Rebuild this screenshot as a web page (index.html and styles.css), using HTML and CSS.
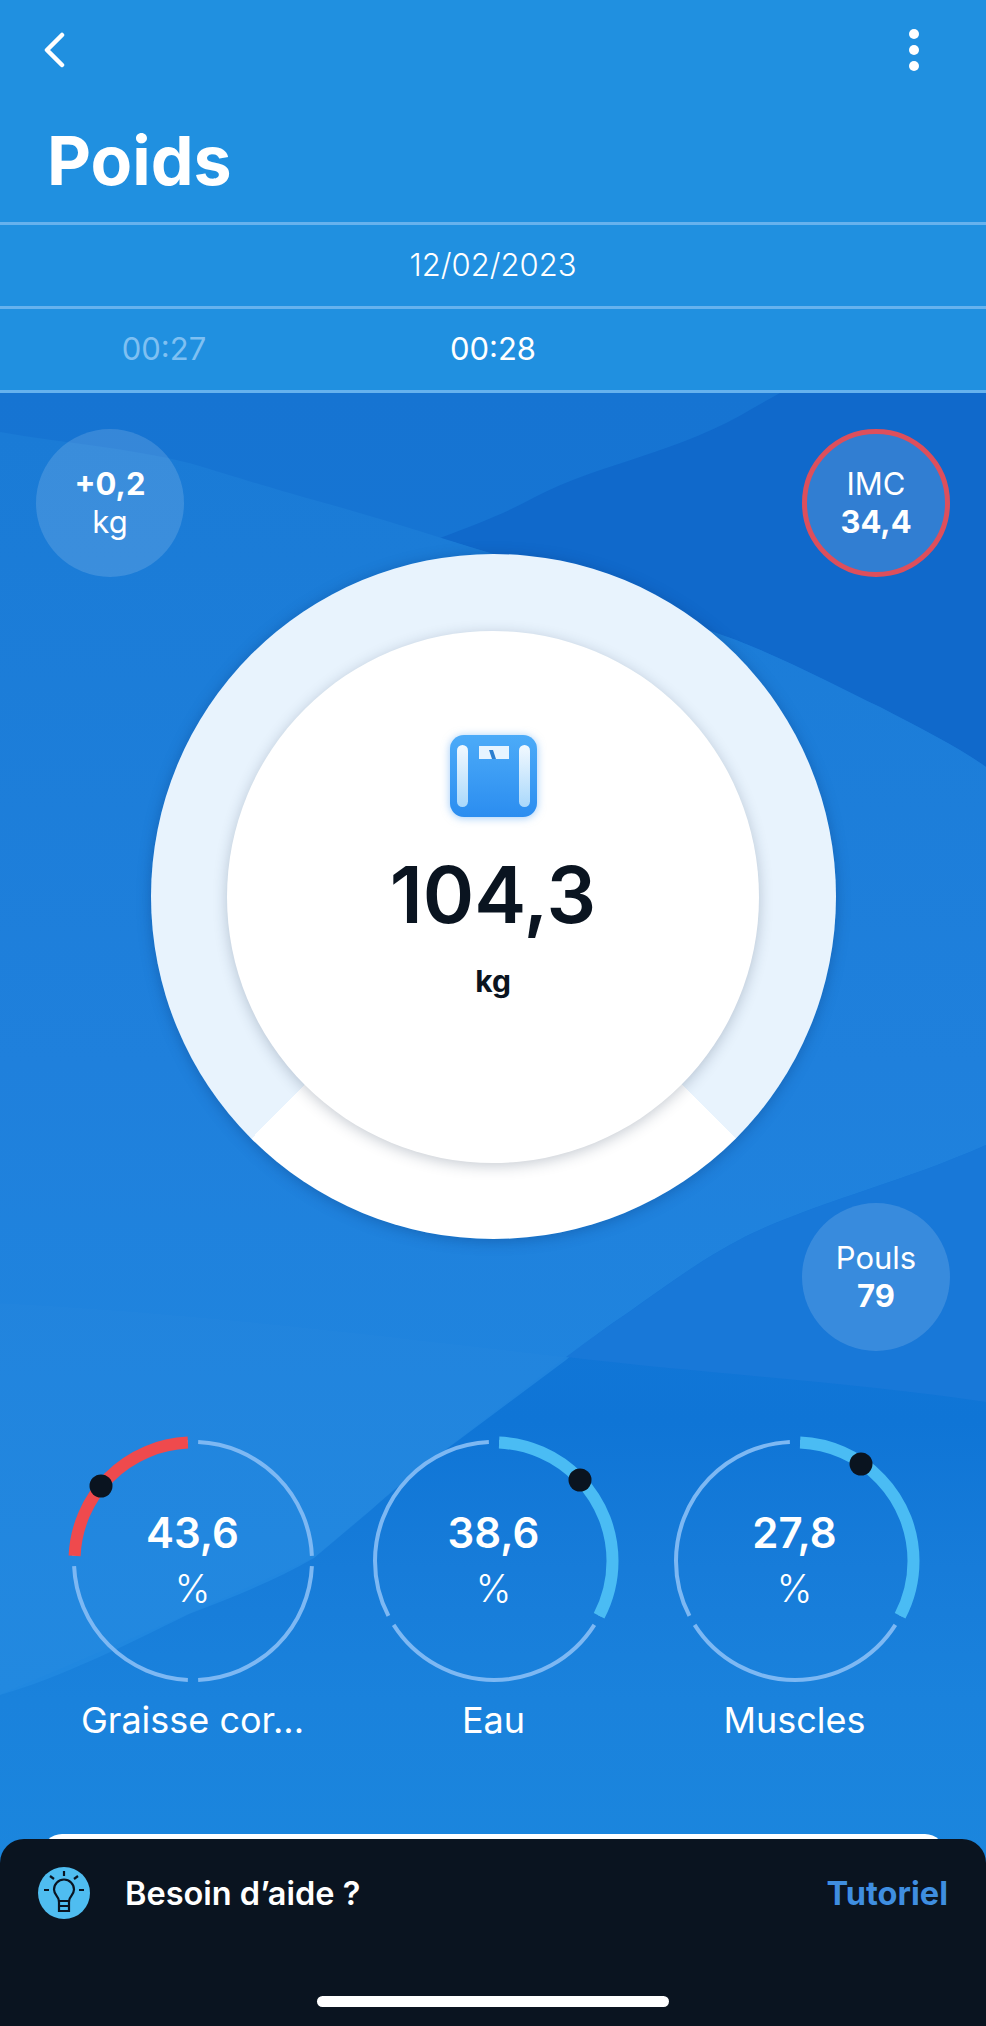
FILE: index.html
```html
<!DOCTYPE html>
<html lang="fr">
<head>
    <meta charset="UTF-8">
    <meta name="viewport" content="width=device-width, initial-scale=1.0">
    <title>Poids</title>
    <link rel="stylesheet" href="styles.css">
</head>
<body>
    <header class="top">
        <div class="top-bar">
            <svg class="back-icon" viewBox="0 0 24 36">
                <path d="M20 3 L5 18 L20 33"></path>
            </svg>
            <svg class="more-icon" viewBox="0 0 12 44">
                <circle cx="6" cy="6" r="5"></circle>
                <circle cx="6" cy="22" r="5"></circle>
                <circle cx="6" cy="38" r="5"></circle>
            </svg>
        </div>
        <h1>Poids</h1>
        <div class="date-row">12/02/2023</div>
        <div class="time-row">
            <span class="time-old">00:27</span>
            <span>00:28</span>
            <span></span>
        </div>
    </header>

    <main class="content">
        <!-- soft waves behind everything -->
        <svg class="waves" viewBox="0 0 986 1633">
            <defs>
                <linearGradient id="lightWave" x1="0" y1="0" x2="0" y2="1">
                    <stop offset="0" stop-color="#1a7bd6"></stop>
                    <stop offset="0.5" stop-color="#1f80dc"></stop>
                    <stop offset="1" stop-color="#2088e0"></stop>
                </linearGradient>
            </defs>
            <path class="wave-dark" d="M755 14 C680 60 600 70 535 104 C510 118 480 130 440 145 L490 160 C580 190 660 220 736 247 C790 268 840 295 880 314 C920 335 960 355 986 374 L986 0 L780 0 Z"></path>
            <path class="wave-light" d="M0 39 C63 50 130 55 189 70 C240 85 270 95 314 107 C380 125 440 145 490 160 C580 190 660 220 736 247 C790 268 840 295 880 314 C920 335 960 355 986 374 L986 752 C900 790 830 805 755 839 C710 860 670 890 629 919 C605 935 585 950 566 967 L440 1061 C400 1090 385 1105 371 1117 L314 1165 C270 1190 230 1205 189 1221 C130 1250 60 1285 0 1302 Z"></path>
            <path class="wave-band" d="M986 752 C900 790 830 805 755 839 C710 860 670 890 629 919 C605 935 585 950 566 964 C700 980 860 990 986 1009 Z"></path>
            <path class="wave-faint" d="M0 910 C200 920 400 945 566 964 L440 1061 L371 1117 L314 1165 L189 1221 L0 1302 Z"></path>
        </svg>

        <div class="bubble-row">
            <div class="bubble">
                <b>+0,2</b>
                <span>kg</span>
            </div>
            <div class="bubble bubble-alert">
                <span>IMC</span>
                <b>34,4</b>
            </div>
        </div>

        <div class="ring">
            <div class="ring-inner">
                <svg class="scale-icon" viewBox="0 0 87 82">
                    <defs>
                        <linearGradient id="scaleBg" x1="0" y1="0" x2="0" y2="1">
                            <stop offset="0" stop-color="#4cabf8"></stop>
                            <stop offset="1" stop-color="#2b8df0"></stop>
                        </linearGradient>
                        <linearGradient id="scaleBar" x1="0" y1="0" x2="0" y2="1">
                            <stop offset="0" stop-color="#f2f9ff"></stop>
                            <stop offset="1" stop-color="#a9d8fb"></stop>
                        </linearGradient>
                    </defs>
                    <rect width="87" height="82" rx="14" fill="url(#scaleBg)"></rect>
                    <rect x="7" y="10" width="11" height="62" rx="5.5" fill="url(#scaleBar)"></rect>
                    <rect x="69" y="10" width="11" height="62" rx="5.5" fill="url(#scaleBar)"></rect>
                    <rect x="29" y="11" width="30" height="13" fill="#e6f4ff"></rect>
                    <path d="M39 15 L43 15 L46 24 L42 24 Z" fill="#2b7fd0"></path>
                </svg>
                <div class="weight">104,3</div>
                <div class="weight-unit">kg</div>
            </div>
        </div>

        <div class="pulse-row">
            <div class="bubble">
                <span>Pouls</span>
                <b>79</b>
            </div>
        </div>

        <div class="gauges">
            <div class="gauge">
                <div class="dial">
                    <svg viewBox="0 0 260 260">
                        <circle class="track track-4" cx="130" cy="130" r="119" pathLength="360"></circle>
                        <circle class="arc arc-red" cx="130" cy="130" r="118.5" pathLength="360"></circle>
                        <circle class="knob" cx="38" cy="55" r="11.5"></circle>
                    </svg>
                    <div class="dial-text">
                        <b>43,6</b>
                        <span>%</span>
                    </div>
                </div>
                <div class="gauge-name">Graisse cor...</div>
            </div>
            <div class="gauge">
                <div class="dial">
                    <svg viewBox="0 0 260 260">
                        <circle class="track track-3" cx="130" cy="130" r="119" pathLength="360"></circle>
                        <circle class="arc arc-blue" cx="130" cy="130" r="118.5" pathLength="360"></circle>
                        <circle class="knob" cx="216" cy="49" r="11.5"></circle>
                    </svg>
                    <div class="dial-text">
                        <b>38,6</b>
                        <span>%</span>
                    </div>
                </div>
                <div class="gauge-name">Eau</div>
            </div>
            <div class="gauge">
                <div class="dial">
                    <svg viewBox="0 0 260 260">
                        <circle class="track track-3" cx="130" cy="130" r="119" pathLength="360"></circle>
                        <circle class="arc arc-blue" cx="130" cy="130" r="118.5" pathLength="360"></circle>
                        <circle class="knob" cx="196" cy="33" r="11.5"></circle>
                    </svg>
                    <div class="dial-text">
                        <b>27,8</b>
                        <span>%</span>
                    </div>
                </div>
                <div class="gauge-name">Muscles</div>
            </div>
        </div>

        <div class="card-peek"></div>
    </main>

    <div class="help-sheet">
        <div class="help-row">
            <svg class="bulb-icon" viewBox="0 0 52 52">
                <circle class="bulb-bg" cx="26" cy="26" r="26"></circle>
                <path class="bulb-line" d="M21 34 C21 30 16 28 16 22.500 A10 10 0 0 1 36 22.500 C36 28 31 30 31 34 Z"></path>
                <path class="bulb-line" d="M21 34 H31 V44 H21 Z M21 39 H31"></path>
                <path class="bulb-line" d="M26 4 V9 M12 9 L16 12 M40 9 L36 12 M6 23 H11 M41 23 H46"></path>
            </svg>
            <span class="help-text">Besoin d’aide ?</span>
            <span class="help-link">Tutoriel</span>
        </div>
        <div class="home-bar"></div>
    </div>
</body>
</html>
```

FILE: styles.css
```css
* {
    box-sizing: border-box;
}

html, body {
    margin: 0;
    padding: 0;
}

body {
    position: relative;
    width: 986px;
    height: 2026px;
    overflow: hidden;
    font-family: Inter, "Liberation Sans", sans-serif;
    color: #fff;
    background-color: #1e84de;
}

/* header */
.top {
    background-color: #2090e0;
    height: 393px;
}

.top-bar {
    display: flex;
    justify-content: space-between;
    align-items: center;
    padding: 23px 66px 0 42px;
    height: 77px;
}

.back-icon {
    width: 24px;
    height: 36px;
    fill: none;
    stroke: #fff;
    stroke-width: 4.5;
    stroke-linecap: round;
    stroke-linejoin: round;
}

.more-icon {
    width: 12px;
    height: 44px;
    fill: #fff;
}

h1 {
    margin: 0;
    padding: 38px 0 0 47px;
    height: 145px;
    font-size: 68px;
    font-weight: 700;
    line-height: 90px;
}

.date-row,
.time-row {
    height: 84px;
    border-top: 3px solid #66b2ee;
    font-size: 31px;
    font-weight: 300;
    line-height: 79px;
}

.date-row {
    text-align: center;
}

.time-row {
    height: 87px;
    display: grid;
    grid-template-columns: 328px 330px 328px;
    text-align: center;
    border-bottom: 3px solid #66b2ee;
    font-weight: 400;
}

.time-old {
    color: #7fc0f2;
}

/* main area */
.content {
    position: relative;
    height: 1633px;
    padding: 36px 36px 0;
    background: linear-gradient(180deg, #1674d2 0%, #1678d8 46%, #0f75d6 63%, #177cd9 72%, #1a82dc 80%, #1c8adf 100%);
}

.waves {
    position: absolute;
    left: 0;
    top: 0;
    width: 986px;
    height: 1633px;
}

.wave-dark {
    fill: #1069cb;
}

.wave-light {
    fill: url(#lightWave);
}

.wave-band {
    fill: #1878d8;
}

.wave-faint {
    fill: rgba(255, 255, 255, 0.012);
}

.bubble-row,
.pulse-row {
    position: relative;
    display: flex;
    justify-content: space-between;
}

.pulse-row {
    justify-content: flex-end;
    margin-top: -36px;
}

.bubble {
    display: flex;
    flex-direction: column;
    align-items: center;
    justify-content: center;
    width: 148px;
    height: 148px;
    border-radius: 50%;
    background-color: rgba(255, 255, 255, 0.14);
    font-size: 31px;
    line-height: 38px;
}

.bubble b {
    font-weight: 700;
}

.bubble-alert {
    border: 5px solid #dd4f5c;
}

/* big ring */
.ring {
    position: relative;
    width: 685px;
    height: 685px;
    margin: -23px auto 0;
    border-radius: 50%;
    background: conic-gradient(from 135deg, #fff 0deg 90deg, #e8f3fd 90deg 360deg);
    display: flex;
    align-items: center;
    justify-content: center;
    box-shadow: 0 2px 14px rgba(8, 50, 110, 0.35);
}

.ring-inner {
    width: 532px;
    height: 532px;
    border-radius: 50%;
    background-color: #fff;
    box-shadow: 0 3px 14px rgba(30, 50, 80, 0.25);
    color: #0a1420;
    display: flex;
    flex-direction: column;
    align-items: center;
    padding-top: 104px;
}

.scale-icon {
    width: 87px;
    height: 82px;
    filter: drop-shadow(0 1px 4px rgba(60, 150, 240, 0.5));
}

.weight {
    margin-top: 30px;
    font-size: 78px;
    font-weight: 600;
    line-height: 96px;
}

.weight-unit {
    margin-top: 20px;
    font-size: 30px;
    font-weight: 700;
    line-height: 36px;
}

/* small gauges */
.gauges {
    position: relative;
    display: grid;
    grid-template-columns: repeat(3, 301px);
    margin: 80px 0 0 6px;
    justify-items: center;
}

.gauge {
    display: flex;
    flex-direction: column;
    align-items: center;
}

.dial {
    display: grid;
    width: 260px;
    height: 260px;
}

.dial svg,
.dial-text {
    grid-area: 1 / 1;
}

.dial svg {
    width: 260px;
    height: 260px;
    overflow: visible;
}

.track,
.arc {
    fill: none;
    transform: rotate(-90deg);
    transform-origin: 130px 130px;
}

.track {
    stroke: #7db8f3;
    stroke-width: 4;
}

.track-4 {
    stroke-dasharray: 85 5;
    stroke-dashoffset: -2.5;
}

.track-3 {
    stroke-dasharray: 115 5;
    stroke-dashoffset: -2.5;
}

.arc {
    stroke-width: 12;
}

.arc-red {
    stroke: #ef4a4d;
    stroke-dasharray: 85 275;
    stroke-dashoffset: -272.5;
}

.arc-blue {
    stroke: #4abcf4;
    stroke-dasharray: 115 245;
    stroke-dashoffset: -2.5;
}

.knob {
    fill: #0a1420;
}

.dial-text {
    display: flex;
    flex-direction: column;
    align-items: center;
    padding-top: 78px;
}

.dial-text b {
    font-size: 42px;
    font-weight: 600;
    line-height: 48px;
}

.dial-text span {
    margin-top: 8px;
    font-size: 38px;
    line-height: 46px;
    font-weight: 300;
}

.gauge-name {
    margin-top: 7px;
    font-size: 36px;
    line-height: 44px;
    white-space: nowrap;
}

.card-peek {
    position: relative;
    margin: 92px 5px 0 6px;
    height: 40px;
    border-radius: 20px;
    background-color: #fff;
}

/* bottom sheet */
.help-sheet {
    position: absolute;
    left: 0;
    right: 0;
    bottom: 0;
    height: 187px;
    background-color: #0a1420;
    border-radius: 24px 24px 0 0;
}

.help-row {
    display: flex;
    align-items: center;
    padding: 28px 38px 0 38px;
}

.bulb-icon {
    width: 52px;
    height: 52px;
    margin-right: 35px;
}

.bulb-bg {
    fill: #4fbdf0;
}

.bulb-line {
    fill: none;
    stroke: #0a1420;
    stroke-width: 2.2;
}

.help-text {
    flex: 1;
    font-size: 32.5px;
    font-weight: 600;
}

.help-link {
    font-size: 32.5px;
    font-weight: 700;
    color: #3f8ee0;
}

.home-bar {
    width: 352px;
    height: 11px;
    margin: 77px auto 0;
    border-radius: 6px;
    background-color: #fff;
}
```
